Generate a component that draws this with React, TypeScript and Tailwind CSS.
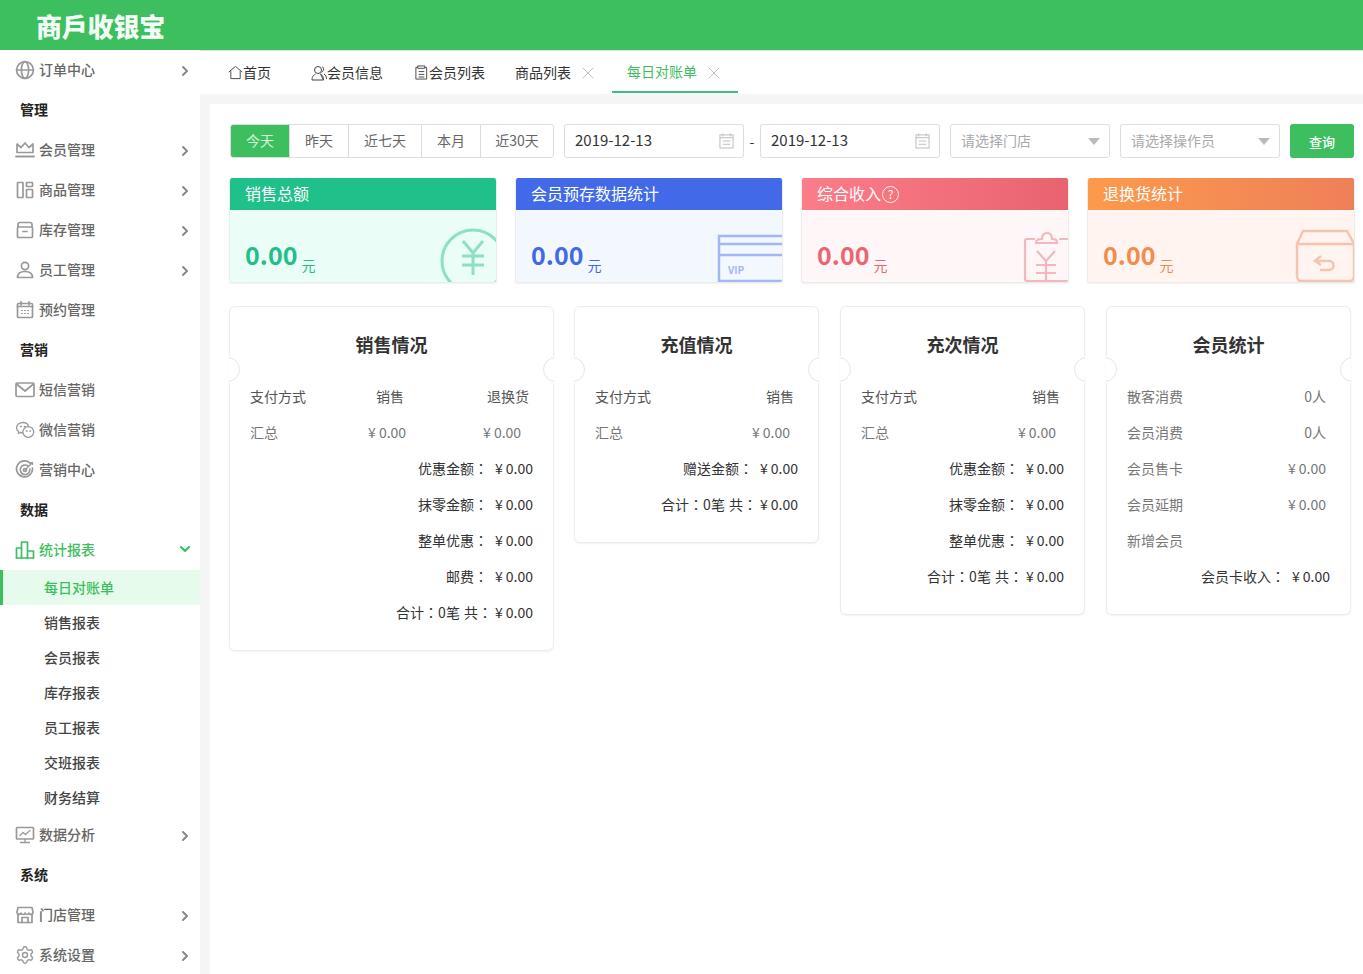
import type { ReactNode } from "react"
import { ChevronRight, ChevronDown, X, Settings } from "lucide-react"

const FONT = { fontFamily: '"Noto Sans CJK SC", "Noto Sans", sans-serif' }

function Ico({ children, className = "text-[#999]" }: { children: ReactNode; className?: string }) {
  return (
    <svg viewBox="0 0 20 20" className={`w-[20px] h-[20px] shrink-0 ${className}`} fill="none" stroke="currentColor" strokeWidth="1.7" strokeLinecap="round" strokeLinejoin="round">
      {children}
    </svg>
  )
}

const icons: Record<string, ReactNode> = {
  globe: <><circle cx="10" cy="10" r="8.4" /><ellipse cx="10" cy="10" rx="3.6" ry="8.4" /><path d="M1.6 10h16.8" /></>,
  crown: <><path d="M2 12.5V4l4 3.5L10 3l4 4.5L18 4v8.5z" /><path d="M1 16.5h18" strokeWidth="1.8" /></>,
  layout: <><rect x="2.5" y="2.5" width="5.5" height="15" rx=".5" /><rect x="11.5" y="2.5" width="6" height="4" rx=".5" /><rect x="11.5" y="9.5" width="6" height="8" rx=".5" /></>,
  box: <><path d="M3 7V4.5C3 3 4 2.5 5 2.5h10c1 0 2 .5 2 2V7" /><rect x="2.5" y="7" width="15" height="10.5" rx="1" /><path d="M8 11.5h4" /></>,
  user: <><circle cx="10" cy="6" r="3.6" /><path d="M2.5 17.5c0-4 3-6 7.500-6s7.500 2 7.500 6z" /></>,
  calendar: <><rect x="2.500" y="3.500" width="15" height="14" rx="1" /><path d="M2.500 6.500h15M6 1.800v3M14 1.800v3" /><path d="M6.500 10.500h1M9.500 10.500h1M12.500 10.500h1M6.500 13.500h1M9.500 13.500h1M12.500 13.500h1" strokeWidth="1" /></>,
  mail: <><rect x="1" y="3" width="18" height="13.500" rx="1.200" /><path d="M1.500 4l8.500 7 8.500-7" /></>,
  wechat: <><path d="M13.500 6.500C13 4 10.500 2.500 8 2.500c-3.500 0-6.500 2.300-6.500 5.200 0 1.800 1 3 2.300 4l-.5 1.800 2.200-1c.8.200 1.500.3 2.200.3" strokeWidth="1.300" /><circle cx="13.300" cy="12" r="5.400" strokeWidth="1.300" /><path d="M5.500 6.500h.6M9.500 6.500h.6M11.500 11h.4M15 11h.4" /></>,
  target: <><path d="M15.500 3.500A8 8 0 1 0 17.500 8" /><path d="M13 6a4.800 4.800 0 1 0 1.800 3" /><circle cx="10" cy="10" r="1.500" /><path d="M10 10l7-7M15.500 2.500l2 0v2" strokeWidth="1.200" /></>,
  bars: <><path d="M1.500 18V8h5v10M6.500 18V2h6v16M12.500 18v-7h6v7" /><path d="M1.500 18h17" /></>,
  monitor: <><rect x="1.500" y="2.500" width="17" height="11.500" rx=".8" /><path d="M10 14v3.500M5.500 17.500h9M5 10.500l3-3 2.500 2L15 5.500" strokeWidth="1.300" /></>,
  store: <><path d="M3 9v8.500h14V9" /><path d="M2 7l1-4.500h14L18 7c0 3-3.500 3-4 1-.5 2-3.500 2-4 0-.5 2-3.500 2-4 0-.5 2-4 2-4-1z" /><path d="M7 17.500v-5h6v5" /></>,
  gear: <Settings size={20} strokeWidth={1.7} />,
}

type MenuItem = { kind: "head"; label: string } | { kind: "item"; label: string; icon: string; open?: boolean }

const menuTop: MenuItem[] = [
  { kind: "item", label: "订单中心", icon: "globe" },
  { kind: "head", label: "管理" },
  { kind: "item", label: "会员管理", icon: "crown" },
  { kind: "item", label: "商品管理", icon: "layout" },
  { kind: "item", label: "库存管理", icon: "box" },
  { kind: "item", label: "员工管理", icon: "user" },
  { kind: "item", label: "预约管理", icon: "calendar", open: true },
  { kind: "head", label: "营销" },
  { kind: "item", label: "短信营销", icon: "mail", open: true },
  { kind: "item", label: "微信营销", icon: "wechat", open: true },
  { kind: "item", label: "营销中心", icon: "target", open: true },
  { kind: "head", label: "数据" },
]

const menuBottom: MenuItem[] = [
  { kind: "item", label: "数据分析", icon: "monitor" },
  { kind: "head", label: "系统" },
  { kind: "item", label: "门店管理", icon: "store" },
  { kind: "item", label: "系统设置", icon: "gear" },
]

const subItems = ["销售报表", "会员报表", "库存报表", "员工报表", "交班报表", "财务结算"]

function MenuRow({ item }: { item: MenuItem }) {
  if (item.kind === "head") {
    return <div className="h-[40px] flex items-center pl-[20px] pb-[2px] text-[14px] font-bold text-[#222]">{item.label}</div>
  }
  return (
    <div className="h-[40px] flex items-center pl-[15px] pr-[7px] text-[14px] font-medium text-[#666]">
      <Ico>{icons[item.icon]}</Ico>
      <span className="ml-[4px] flex-1 -mt-[2px]">{item.label}</span>
      {!item.open && <ChevronRight className="w-[16px] h-[16px] mt-[2px] text-[#888]" strokeWidth={3} />}
    </div>
  )
}

function Sidebar() {
  return (
    <aside className="w-[200px] shrink-0 bg-white">
      {menuTop.map((m) => <MenuRow key={m.label} item={m} />)}
      <div className="h-[40px] flex items-center pl-[15px] pr-[7px] text-[14px] font-medium text-[#3dbf5f]">
        <Ico className="text-[#3dbf5f]">{icons.bars}</Ico>
        <span className="ml-[4px] flex-1 -mt-[2px]">统计报表</span>
        <ChevronDown className="w-[16px] h-[16px] -mt-[2px]" strokeWidth={3.2} />
      </div>
      <div className="h-[35px] flex items-center pl-[41px] border-l-[3px] border-[#3dbf5f] bg-[#e6fbec] text-[14px] font-medium text-[#3dbf5f]">每日对账单</div>
      {subItems.map((s) => (
        <div key={s} className="h-[35px] flex items-center pl-[44px] text-[14px] font-medium text-[#444]">{s}</div>
      ))}
      {menuBottom.map((m) => <MenuRow key={m.label} item={m} />)}
    </aside>
  )
}

function Tabs() {
  return (
    <div className="h-[44px] shrink-0 bg-white border-t border-[#c9ecd3] flex pl-[13px] text-[14px] text-[#333]">
      <div className="w-[83px] pl-[15px] flex items-center">
        <svg viewBox="0 0 16 16" className="w-[15px] h-[15px]" fill="none" stroke="#444" strokeWidth="1"><path d="M.8 7.500L8 1.500l7.200 6M3 6.500v8h10v-8" /></svg>
        <span>首页</span>
      </div>
      <div className="w-[103px] pl-[15px] flex items-center">
        <svg viewBox="0 0 16 16" className="w-[16px] h-[16px]" fill="none" stroke="#444" strokeWidth="1"><circle cx="7" cy="5" r="3.500" /><path d="M1 15c0-4 2-5 3.500-6M9.500 9c1.500 1 3 2 3 6zM1 15h11.500M11 1.800c2 .5 2.500 4-.5 5.500M13 9c1.500 1 2.500 2.500 2.500 5" /></svg>
        <span>会员信息</span>
      </div>
      <div className="w-[101px] pl-[15px] flex items-center">
        <svg viewBox="0 0 16 16" className="w-[15px] h-[15px]" fill="none" stroke="#444" strokeWidth="1"><path d="M4 2.500H2v12.500h11.500V2.500h-2" /><path d="M4 1h7.500v2.500H4zM5 7h6M5 10h6M5 12.800h6" /></svg>
        <span>会员列表</span>
      </div>
      <div className="w-[112px] pl-[15px] flex items-center">
        <span>商品列表</span>
        <X className="w-[20px] h-[20px] ml-[7px] mt-[1px] text-[#bbb]" strokeWidth={1.1} />
      </div>
      <div className="w-[126px] pl-[15px] flex items-center text-[#3dbf5f] border-b-[2px] border-[#3dbf7a] mb-[1px]">
        <span>每日对账单</span>
        <X className="w-[20px] h-[20px] ml-[7px] mt-[3px] text-[#bbb]" strokeWidth={1.1} />
      </div>
    </div>
  )
}

function DateBox() {
  return (
    <div className="w-[180px] h-[34px] border border-[#ddd] rounded-[3px] flex items-center justify-between pl-[10px] pr-[9px] text-[15px] text-[#333]">
      <span className="-mt-[2px]">2019-12-13</span>
      <svg viewBox="0 0 16 17" className="w-[15px] h-[16px]" fill="none" stroke="#bbb" strokeWidth="1"><rect x="1" y="2" width="14" height="14" /><path d="M4 .5v3M12 .5v3M1 5h14M4 8.500h8M4 12h8" /></svg>
    </div>
  )
}

function SelectBox({ label }: { label: string }) {
  return (
    <div className="w-[160px] h-[34px] border border-[#ddd] rounded-[3px] flex items-center justify-between pl-[10px] pr-[9px] text-[14px] text-[#aaa]">
      <span className="-mt-[2px]">{label}</span>
      <span className="w-0 h-0 border-x-[6px] border-x-transparent border-t-[7px] border-t-[#bbb]" />
    </div>
  )
}

function Filters() {
  const ranges = [["今天", "w-[58px]"], ["昨天", "w-[59px]"], ["近七天", "w-[73px]"], ["本月", "w-[59px]"], ["近30天", "w-[73px]"]]
  return (
    <div className="flex items-center">
      <div className="flex h-[34px] border border-[#ddd] rounded-[3px] overflow-hidden text-[14px] text-[#666]">
        {ranges.map(([r, w], i) => (
          <div key={r} className={`${w} flex items-center justify-center pb-[2px] ${i === 0 ? "bg-[#3dbf5f] text-white/80" : "border-l border-[#ddd]"}`}>{r}</div>
        ))}
      </div>
      <div className="ml-[10px]"><DateBox /></div>
      <span className="w-[16px] text-center text-[14px] text-[#333]">-</span>
      <DateBox />
      <div className="ml-[10px]"><SelectBox label="请选择门店" /></div>
      <div className="ml-[10px]"><SelectBox label="请选择操作员" /></div>
      <button className="ml-[10px] w-[64px] h-[34px] rounded-[3px] bg-[#3dbf5f] text-white text-[13px] font-medium pt-[2px]">查询</button>
    </div>
  )
}

function StatCard({ title, head, body, num, art, help }: { title: string; head: string; body: string; num: string; art: ReactNode; help?: boolean }) {
  return (
    <div className={`relative w-[268px] h-[105px] rounded-[3px] overflow-hidden border-x border-b border-[#ececec] shadow-[0_1px_2px_rgba(0,0,0,0.06)] ${body}`}>
      <div className={`h-[32px] flex items-center pl-[15px] pb-[2px] text-[16px] text-white ${head}`}>
        {title}
        {help && <span className="ml-[1px] mt-[2px] w-[17px] h-[17px] rounded-full border border-white/90 flex items-center justify-center text-[12px] leading-none">?</span>}
      </div>
      <div className={`pl-[15px] pt-[27px] flex items-end ${num}`}>
        <span className="text-[25px] leading-[34px] font-bold">0.00</span>
        <span className="ml-[4px] -mb-[4px] text-[14px] leading-[20px] font-normal">元</span>
      </div>
      {art}
    </div>
  )
}

function Notch({ side }: { side: "left" | "right" }) {
  return (
    <div className={`absolute top-[49px] w-[12px] h-[27px] bg-white overflow-hidden ${side === "left" ? "-left-[1px]" : "-right-[1px]"}`}>
      <div className={`absolute top-[1px] w-[25px] h-[25px] rounded-full border border-[#e6e6e6] ${side === "left" ? "-left-[14px]" : "-right-[14px]"}`} />
    </div>
  )
}

function Report({ title, w, children }: { title: string; w: string; children: ReactNode }) {
  return (
    <div className={`relative ${w} self-start rounded-[6px] border border-[#ececec] shadow-[0_1px_2px_rgba(0,0,0,0.05)] bg-white pb-[19px]`}>
      <Notch side="left" />
      <Notch side="right" />
      <div className="h-[72px] pt-[2px] flex items-center justify-center text-[18px] font-bold text-[#333]">{title}</div>
      {children}
    </div>
  )
}

function Row({ className = "", children }: { className?: string; children: ReactNode }) {
  return <div className={`h-[36px] flex items-center pb-[2px] text-[14px] ${className}`}>{children}</div>
}

function Colon() {
  return <span className="font-['Noto_Sans_CJK_TC']">：</span>
}

function Sum({ label, value = "¥ 0.00" }: { label: string; value?: string }) {
  return (
    <Row className="justify-end pr-[20px] text-[#333]">
      <span>{label}</span>
      <Colon />
      <span className="ml-[7px]">{value}</span>
    </Row>
  )
}

function Total() {
  return (
    <Row className="justify-end pr-[20px] text-[#333]">
      <span>合计</span>
      <Colon />
      <span>0笔</span>
      <span className="ml-[4px]">共</span>
      <Colon />
      <span className="ml-[3px]">¥ 0.00</span>
    </Row>
  )
}

function TwoCol({ first = "支付方式", second = "销售" }: { first?: string; second?: string }) {
  return (
    <>
      <Row className="justify-between pl-[20px] pr-[24px] text-[#555]"><span>{first}</span><span>{second}</span></Row>
      <Row className="justify-between pl-[20px] pr-[28px] text-[#777]"><span>汇总</span><span>¥ 0.00</span></Row>
    </>
  )
}

function KV({ k, v }: { k: string; v: string }) {
  return <Row className="justify-between pl-[20px] pr-[24px] text-[#777]"><span>{k}</span><span>{v}</span></Row>
}

export default function App() {
  return (
    <div className="w-full h-screen overflow-hidden flex flex-col bg-white" style={FONT}>
      <header className="h-[50px] shrink-0 bg-[#3dbf5f] flex items-center pl-[36px] pt-[2px]">
        <span className="text-[26px] leading-none font-black tracking-[-0.2px] text-white/95">商戶收银宝</span>
      </header>
      <div className="flex flex-1 min-h-0">
        <Sidebar />
        <div className="flex-1 flex flex-col min-w-0">
          <Tabs />
          <main className="flex-1 bg-[#f5f5f5] pl-[10px] pt-[10px]">
            <div className="h-full bg-white pl-[20px] pt-[20px]">
              <Filters />
              <div className="flex gap-[18px] mt-[20px] -ml-[1px]">
                <StatCard title="销售总额" head="bg-[#20c08a]" body="bg-[#ebfdf7]" num="text-[#20c08a]" art={
                  <svg className="absolute -right-[1px] -bottom-[1px] w-[60px] h-[56px]" viewBox="0 0 60 56" fill="none" stroke="#8ee0c3" strokeWidth="3">
                    <circle cx="36" cy="34" r="31" />
                    <path d="M26 14l10 12 10-12M25 29h22M25 38h22M36 26v22" />
                  </svg>
                } />
                <StatCard title="会员预存数据统计" head="bg-[#4169e8]" body="bg-[#f3f8fe]" num="text-[#4169e8]" art={
                  <svg className="absolute -right-[1px] -bottom-[1px] w-[66px] h-[50px]" viewBox="0 0 66 50" fill="none" stroke="#a3b7f2" strokeWidth="2.500">
                    <path d="M66 3H2v45h64M2 11h64M2 22h64" />
                    <text x="11" y="41" fontSize="10" fontWeight="700" fill="#a3b7f2" stroke="none">VIP</text>
                  </svg>
                } />
                <StatCard title="综合收入" help head="bg-gradient-to-r from-[#fb7d8a] to-[#e9636f]" body="bg-[#fef6f7]" num="text-[#ec6472]" art={
                  <svg className="absolute -right-[1px] -bottom-[1px] w-[46px] h-[52px]" viewBox="0 0 46 52" fill="none" stroke="#f3b7bd" strokeWidth="2.200">
                    <path d="M12 8H4a2 2 0 0 0-2 2v38a2 2 0 0 0 2 2h42M36 8h10" />
                    <path d="M13 12c0-4 3-4 6-4 0-4 2-6 5-6s5 2 5 6c3 0 5 0 5 4z" />
                    <path d="M14 20l9 10 9-10M13 34h20M13 42h20M23 30v20" />
                  </svg>
                } />
                <StatCard title="退换货统计" head="bg-gradient-to-r from-[#fc9a4b] to-[#ee8059]" body="bg-[#fff4f0]" num="text-[#f48a4e]" art={
                  <svg className="absolute -right-[1px] -bottom-[1px] w-[60px] h-[54px]" viewBox="0 0 60 54" fill="none" stroke="#f6c4ae" strokeWidth="2.500">
                    <path d="M2 15L8 2h44l7 13" />
                    <path d="M2 15h57v32c0 3-2 5-4 5H6c-2 0-4-2-4-5z" />
                    <path d="M26 27l-6 5 6 4M21 32h13c6 0 6 9 0 9h-9" />
                  </svg>
                } />
              </div>
              <div className="flex gap-[21px] mt-[23px] -ml-[1px]">
                <div className="-mr-[1px]">
                  <Report title="销售情况" w="w-[325px]">
                    <Row className="text-[#555] pl-[20px]"><span className="w-[126px]">支付方式</span><span className="w-[111px]">销售</span><span>退换货</span></Row>
                    <Row className="text-[#777] pl-[20px]"><span className="w-[118px]">汇总</span><span className="w-[115px]">¥ 0.00</span><span>¥ 0.00</span></Row>
                    <Sum label="优惠金额" />
                    <Sum label="抹零金额" />
                    <Sum label="整单优惠" />
                    <Sum label="邮费" />
                    <Total />
                  </Report>
                </div>
                <Report title="充值情况" w="w-[245px]">
                  <TwoCol />
                  <Sum label="赠送金额" />
                  <Total />
                </Report>
                <Report title="充次情况" w="w-[245px]">
                  <TwoCol />
                  <Sum label="优惠金额" />
                  <Sum label="抹零金额" />
                  <Sum label="整单优惠" />
                  <Total />
                </Report>
                <Report title="会员统计" w="w-[245px]">
                  <KV k="散客消费" v="0人" />
                  <KV k="会员消费" v="0人" />
                  <KV k="会员售卡" v="¥ 0.00" />
                  <KV k="会员延期" v="¥ 0.00" />
                  <KV k="新增会员" v="" />
                  <Sum label="会员卡收入" />
                </Report>
              </div>
            </div>
          </main>
        </div>
      </div>
    </div>
  )
}
